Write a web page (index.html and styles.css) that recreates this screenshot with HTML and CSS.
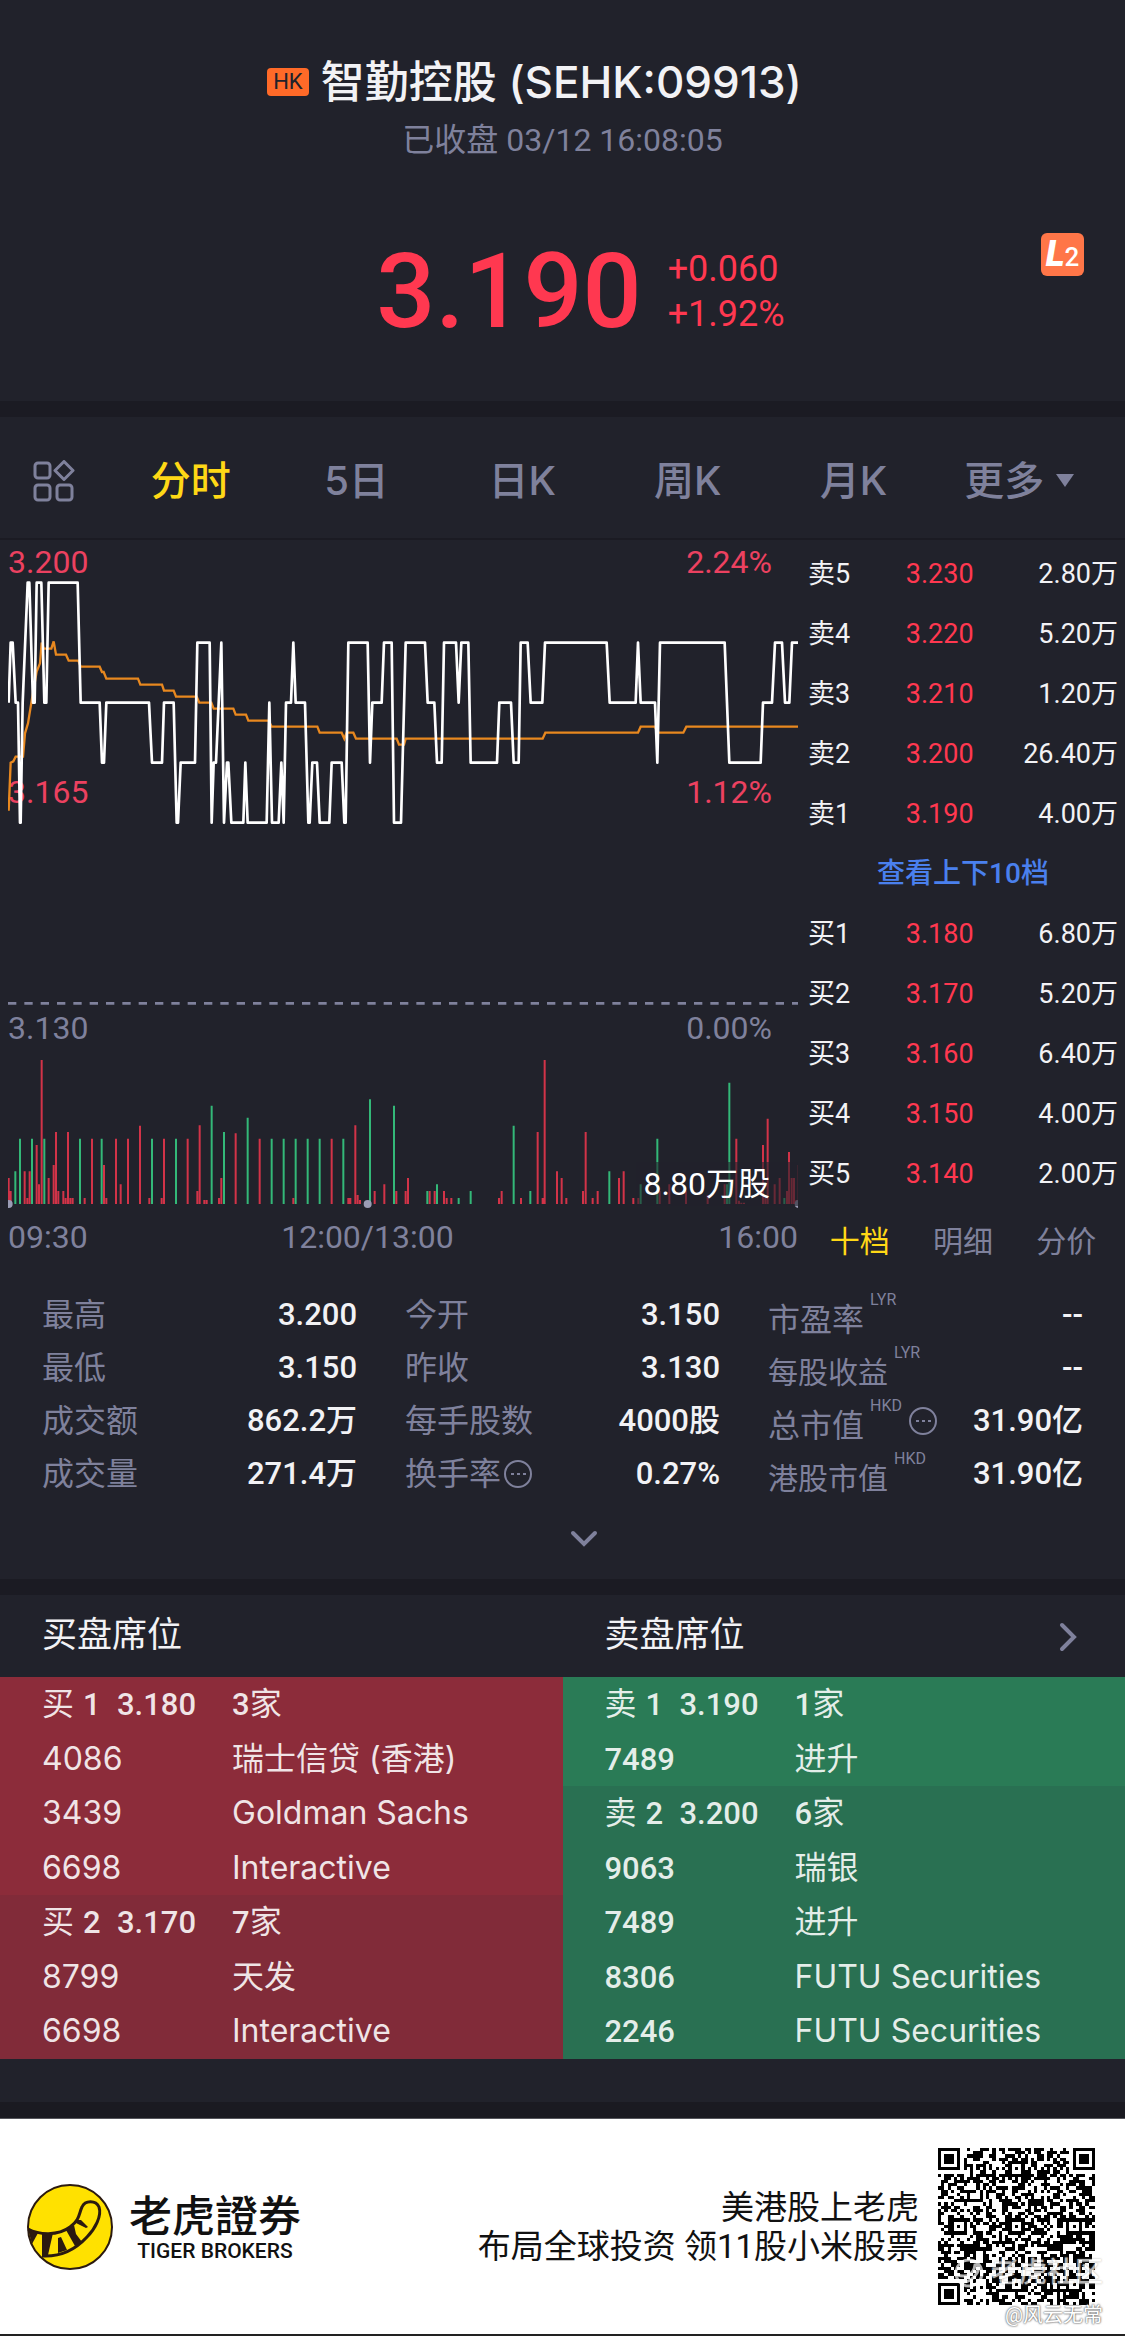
FILE: index.html
```html
<!DOCTYPE html>
<html lang="zh-CN">
  <head>
    <meta charset="UTF-8" />
    <meta name="viewport" content="width=device-width, initial-scale=1.0" />
    <title>智勤控股 (SEHK:09913)</title>
    <link rel="stylesheet" href="styles.css">
  </head>
  <body>
    <header class="quote">
      <h1><span class="market">HK</span>智勤控股 (SEHK:09913)</h1>
      <p class="status">已收盘 03/12 16:08:05</p>
      <div class="price-row">
        <strong class="price">3.190</strong>
        <div class="change">
          <span>+0.060</span>
          <span>+1.92%</span>
        </div>
      </div>
      <span class="level"><b>L</b>2</span>
    </header>

    <nav class="tabs">
      <button class="layout-btn" aria-label="布局">
        <svg width="42" height="42" viewBox="0 0 42 42" fill="none" stroke="currentColor" stroke-width="3">
          <rect x="2" y="3" width="15" height="15" rx="3" />
          <path d="M31 1.500 L40 10.500 L31 19.500 L22 10.500 Z" stroke-linejoin="round" />
          <rect x="2" y="25" width="15" height="15" rx="3" />
          <rect x="24" y="25" width="15" height="15" rx="3" />
        </svg>
      </button>
      <button class="active">分时</button>
      <button>5日</button>
      <button>日K</button>
      <button>周K</button>
      <button>月K</button>
      <button>更多<i class="caret"></i></button>
    </nav>

    <main class="board">
      <section class="chart">
        <div class="plot">
          <span class="tag top up">3.200</span>
          <span class="tag top right up">2.24%</span>
          <span class="tag mid up">3.165</span>
          <span class="tag mid right up">1.12%</span>
          <span class="tag base">3.130</span>
          <span class="tag base right">0.00%</span>
          <svg viewBox="24 0 2370 2004" preserveAspectRatio="none" fill="none">
            <path class="zero" d="M24 1390H2397" />
            <!-- average price -->
            <polyline class="avg" points="26,812 32,668 40,664 47,650 69,650 75,580 84,550 97,470 110,395 120,370 125,308 131,326 154,326 161,304 168,344 198,344 206,362 235,362 242,380 299,380 306,396 311,396 319,416 414,416 421,434 486,434 492,452 521,452 528,470 590,470 598,488 634,488 641,506 700,506 707,524 738,524 745,542 806,542 815,560 952,560 959,578 1025,578 1033,596 1040,578 1060,578 1068,596 1190,596 1197,614 1212,614 1217,596 1628,596 1636,578 1914,578 1922,560 1965,560 1972,578 2050,578 2059,560 2397,560" />
            <!-- price -->
            <polyline class="line" points="26,488 32,308 38,308 47,488 54,488 60,848 62,848 68,488 83,128 88,128 99,488 104,488 110,128 124,128 133,488 139,488 146,128 233,128 242,488 299,488 306,668 312,668 319,488 447,488 456,668 486,668 492,488 521,488 530,848 534,848 542,668 585,668 592,308 629,308 635,848 641,668 648,668 664,308 672,848 681,668 685,668 694,848 730,848 736,668 743,848 800,848 808,488 816,848 836,848 844,668 851,848 858,488 873,488 880,308 887,488 915,488 925,848 929,848 937,668 951,668 959,848 988,848 995,668 1025,668 1033,848 1037,848 1045,308 1103,308 1110,668 1117,488 1145,488 1152,308 1175,308 1182,848 1203,848 1217,308 1275,308 1283,488 1303,488 1311,668 1325,668 1332,308 1368,308 1376,488 1384,308 1405,308 1412,668 1491,668 1498,488 1533,488 1541,668 1556,668 1562,308 1583,308 1592,488 1627,488 1635,308 1820,308 1829,488 1907,488 1914,308 1922,488 1965,488 1972,668 1980,308 2174,308 2188,668 2282,668 2289,488 2316,488 2325,308 2346,308 2355,488 2368,488 2376,308 2397,308" />
            <!-- volume -->
            <g id="volume"></g>
            <g class="dots">
              <circle cx="26" cy="1992" r="12" />
              <circle cx="1103" cy="1992" r="12" />
              <circle cx="2396" cy="1992" r="12" />
            </g>
          </svg>
          <span class="volume-tag">8.80万股</span>
        </div>
        <div class="axis">
          <span>09:30</span>
          <span>12:00/13:00</span>
          <span>16:00</span>
        </div>
      </section>

      <section class="book">
        <table>
          <colgroup><col class="side"><col class="bid"><col></colgroup>
          <tr><td>卖5</td><td>3.230</td><td>2.80万</td></tr>
          <tr><td>卖4</td><td>3.220</td><td>5.20万</td></tr>
          <tr><td>卖3</td><td>3.210</td><td>1.20万</td></tr>
          <tr><td>卖2</td><td>3.200</td><td>26.40万</td></tr>
          <tr><td>卖1</td><td>3.190</td><td>4.00万</td></tr>
          <tr><td colspan="3" class="more"><a href="#">查看上下10档</a></td></tr>
          <tr><td>买1</td><td>3.180</td><td>6.80万</td></tr>
          <tr><td>买2</td><td>3.170</td><td>5.20万</td></tr>
          <tr><td>买3</td><td>3.160</td><td>6.40万</td></tr>
          <tr><td>买4</td><td>3.150</td><td>4.00万</td></tr>
          <tr><td>买5</td><td>3.140</td><td>2.00万</td></tr>
        </table>
        <div class="book-tabs">
          <button class="active">十档</button>
          <button>明细</button>
          <button>分价</button>
        </div>
      </section>
    </main>

    <section class="stats">
      <dl>
        <div><dt>最高</dt><dd>3.200</dd></div>
        <div><dt>最低</dt><dd>3.150</dd></div>
        <div><dt>成交额</dt><dd>862.2万</dd></div>
        <div><dt>成交量</dt><dd>271.4万</dd></div>
      </dl>
      <dl>
        <div><dt>今开</dt><dd>3.150</dd></div>
        <div><dt>昨收</dt><dd>3.130</dd></div>
        <div><dt>每手股数</dt><dd>4000股</dd></div>
        <div>
          <dt>换手率<svg class="info" viewBox="0 0 30 30"><circle cx="15" cy="15" r="13" /><path d="M8 15h3M14 15h3M20 15h3" /></svg></dt>
          <dd>0.27%</dd>
        </div>
      </dl>
      <dl class="noted">
        <div><dt>市盈率<sup>LYR</sup></dt><dd>--</dd></div>
        <div><dt class="small">每股收益<sup>LYR</sup></dt><dd>--</dd></div>
        <div>
          <dt>总市值<sup>HKD</sup><svg class="info" viewBox="0 0 30 30"><circle cx="15" cy="15" r="13" /><path d="M8 15h3M14 15h3M20 15h3" /></svg></dt>
          <dd>31.90亿</dd>
        </div>
        <div><dt class="small">港股市值<sup>HKD</sup></dt><dd>31.90亿</dd></div>
      </dl>
    </section>
    <button class="expand" aria-label="展开">
      <svg width="28" height="18" viewBox="0 0 28 18"><path d="M3 3 L14 14 L25 3" /></svg>
    </button>

    <section class="seats">
      <div class="seats-head">
        <h2>买盘席位</h2>
        <h2>卖盘席位</h2>
        <button aria-label="更多席位">
          <svg width="18" height="30" viewBox="0 0 18 30"><path d="M3 3 L15 15 L3 27" /></svg>
        </button>
      </div>
      <div class="seats-body">
        <table class="buy">
          <tbody>
            <tr class="level-row"><td>买 <b>1</b></td><td>3.180</td><td><b>3</b>家</td></tr>
            <tr><td colspan="2">4086</td><td>瑞士信贷 (香港)</td></tr>
            <tr><td colspan="2">3439</td><td>Goldman Sachs</td></tr>
            <tr><td colspan="2">6698</td><td>Interactive</td></tr>
          </tbody>
          <tbody>
            <tr class="level-row"><td>买 <b>2</b></td><td>3.170</td><td><b>7</b>家</td></tr>
            <tr><td colspan="2">8799</td><td>天发</td></tr>
            <tr><td colspan="2">6698</td><td>Interactive</td></tr>
          </tbody>
        </table>
        <table class="sell">
          <tbody>
            <tr class="level-row"><td>卖 <b>1</b></td><td>3.190</td><td><b>1</b>家</td></tr>
            <tr><td colspan="2">7489</td><td>进升</td></tr>
          </tbody>
          <tbody>
            <tr class="level-row"><td>卖 <b>2</b></td><td>3.200</td><td><b>6</b>家</td></tr>
            <tr><td colspan="2">9063</td><td>瑞银</td></tr>
            <tr><td colspan="2">7489</td><td>进升</td></tr>
            <tr><td colspan="2">8306</td><td>FUTU Securities</td></tr>
            <tr><td colspan="2">2246</td><td>FUTU Securities</td></tr>
          </tbody>
        </table>
      </div>
    </section>

    <footer class="promo">
      <svg class="logo" viewBox="0 0 86 86">
        <circle cx="43" cy="43" r="42" fill="#ffe100" stroke="#2b1a10" stroke-width="2" />
        <path d="M1 45 C12 51 31 52 43 43 C53 36 52 29 55 23 C58 16 69 16 72 23 C75 32 68 45 60 53 C48 66 32 73 15 72" fill="none" stroke="#2b1a10" stroke-width="3" />
        <g fill="#2b1a10">
          <path d="M1 45 L11 49 L5 60 Z" />
          <path d="M15 49 H26 L21 71 L15 71 Z" />
          <path d="M31 54 L34 53 L40 66 L31 69 Z" />
          <path d="M39 46 L47 41 L49 50 L55 58 L48 62 Z" />
          <path d="M49 36 L54 36 L61 43 L59 44 L49 39 Z" />
        </g>
      </svg>
      <div class="brand">
        <strong>老虎證券</strong>
        <span>TIGER BROKERS</span>
      </div>
      <p>美港股上老虎<br>布局全球投资 领11股小米股票</p>
      <div class="code">
        <svg viewBox="0 0 49 49" shape-rendering="crispEdges"><path id="qr" /></svg>
        <span class="community">
          <svg width="32" height="32" viewBox="0 0 32 32"><circle cx="16" cy="16" r="13" /><path d="M4 18 Q20 22 22 8 Q28 8 24 16 Q18 26 8 25" /></svg>老虎社区
        </span>
        <span class="author">@风云无常</span>
      </div>
    </footer>
    <script src="script.js"></script>
  </body>
</html>
```
FILE: styles.css
```css
* {
  box-sizing: border-box;
}
body {
  margin: 0;
  background: #21222b;
  color: #f2f2f5;
  font-family: Roboto, "Noto Sans CJK SC", sans-serif;
  font-size: 32px;
  line-height: 40px;
}
h1,
h2,
p,
dl,
dd {
  margin: 0;
  font-weight: 400;
}
button {
  padding: 0;
  border: none;
  background: none;
  color: #7f819c;
  font: inherit;
  cursor: pointer;
}
table {
  width: 100%;
  border-collapse: collapse;
  table-layout: fixed;
}
td {
  padding: 0;
  vertical-align: baseline;
}

/* header */
.quote {
  position: relative;
  height: 417px;
  padding-top: 56px;
  border-bottom: 16px solid #1b1b23;
}
.quote h1 {
  display: flex;
  justify-content: center;
  align-items: center;
  gap: 12px;
  padding-right: 56px;
  font-family: Inter, "Noto Sans CJK SC", sans-serif;
  font-size: 44px;
  font-weight: 500;
  line-height: 52px;
}
.market {
  padding: 0 6px;
  border-radius: 4px;
  background: #ff6a28;
  color: #21222b;
  font-family: Roboto, sans-serif;
  font-size: 22px;
  font-weight: 400;
  line-height: 28px;
}
.status {
  margin-top: 12px;
  color: #7f819c;
  text-align: center;
}
.price-row {
  display: flex;
  justify-content: center;
  align-items: center;
  gap: 26px;
  margin-top: 70px;
  padding-left: 36px;
  color: #ff3850;
}
.price {
  font-size: 104px;
  font-weight: 500;
  line-height: 124px;
}
.change {
  display: flex;
  flex-direction: column;
  font-size: 36px;
  line-height: 45px;
}
.level {
  position: absolute;
  top: 233px;
  right: 41px;
  width: 43px;
  height: 43px;
  border-radius: 6px;
  background: #ff7648;
  color: #fff;
  font-size: 26px;
  font-weight: 500;
  line-height: 43px;
  text-align: center;
}
.level b {
  font-size: 36px;
  font-style: italic;
  font-weight: 900;
}

/* period tabs */
.tabs {
  display: grid;
  grid-template-columns: 108px repeat(6, 1fr);
  align-items: center;
  height: 123px;
  padding: 6px 23px 0 0;
  border-bottom: 2px solid #1b1b23;
  font-family: Inter, "Noto Sans CJK SC", sans-serif;
  font-size: 40px;
}
.tabs button {
  font-weight: 500;
  line-height: 60px;
}
.tabs .layout-btn {
  display: flex;
  padding-left: 33px;
}
.tabs .active,
.book-tabs .active {
  color: #ffd816;
}
.caret {
  display: inline-block;
  margin-left: 12px;
  border: 9px solid transparent;
  border-top: 13px solid #7f819c;
  border-bottom: none;
  vertical-align: 8px;
}

/* chart and order book */
.board {
  display: grid;
  grid-template-columns: 1fr 325px;
}
.chart {
  padding: 0 2px 0 8px;
}
.plot {
  position: relative;
}
.plot svg {
  position: relative;
  display: block;
  width: 100%;
  height: 668px;
}
.zero {
  stroke: #7f819c;
  stroke-width: 8;
  stroke-dasharray: 25 24;
}
.avg {
  stroke: #e8881f;
  stroke-width: 7;
}
.line {
  stroke: #fff;
  stroke-width: 8;
  stroke-linejoin: round;
}
.rise {
  stroke: #ff3850;
  stroke-width: 6;
  opacity: 0.8;
}
.fall {
  stroke: #33b878;
  stroke-width: 6;
}
.dots {
  fill: #9a9cb4;
}
.tag {
  position: absolute;
  left: 0;
  color: #7f819c;
  line-height: 32px;
}
.tag.right {
  right: 26px;
  left: auto;
}
.tag.up {
  color: #ec4160;
}
.tag.top {
  top: 6px;
}
.tag.mid {
  top: 236px;
}
.tag.base {
  top: 472px;
}
.volume-tag {
  position: absolute;
  right: 0;
  bottom: 2px;
  padding: 0 28px 0 8px;
  background: rgba(33, 34, 43, 0.6);
  color: #fff;
  line-height: 44px;
}
.axis {
  display: grid;
  grid-template-columns: 25fr 41fr 34fr;
  padding-top: 9px;
  color: #7f819c;
}
.axis span:nth-child(2) {
  text-align: center;
}
.axis span:last-child {
  text-align: right;
}
.book {
  padding: 4px 7px 0 8px;
  font-size: 27px;
}
.book .side {
  width: 30%;
}
.book .bid {
  width: 25%;
}
.book td {
  height: 60px;
  line-height: 60px;
}
.book td:nth-child(2) {
  color: #ff3850;
  text-align: center;
}
.book td:nth-child(3) {
  text-align: right;
}
.book .more {
  font-size: 28px;
  font-weight: 500;
  text-align: center;
}
.book a {
  color: #4a80ee;
  text-decoration: none;
}
.book-tabs {
  display: grid;
  grid-template-columns: repeat(3, 1fr);
  font-size: 30px;
  line-height: 76px;
}

/* key figures */
.stats {
  display: grid;
  grid-template-columns: repeat(3, 1fr);
  gap: 48px;
  padding: 8px 42px 0;
}
.stats div {
  display: flex;
  justify-content: space-between;
  align-items: center;
  height: 53px;
}
.stats dt {
  display: flex;
  align-items: center;
  color: #7f819c;
}
.stats dd {
  font-size: 31px;
  font-weight: 500;
}
.noted dt {
  padding-top: 10px;
}
.stats .small {
  font-size: 30px;
}
.stats sup {
  margin: 0 6px;
  padding-bottom: 40px;
  font-size: 16px;
  line-height: 16px;
}
.info {
  width: 30px;
  height: 30px;
  margin-left: 2px;
  fill: none;
  stroke: #7f819c;
  stroke-width: 2;
}
.noted .info {
  margin: 0 0 10px;
}
.expand {
  display: block;
  width: 100%;
  height: 79px;
  padding: 0 0 6px 42px;
}
.expand path,
.seats-head path {
  fill: none;
  stroke: #7f819c;
  stroke-width: 4;
  stroke-linecap: round;
}

/* broker seats */
.seats {
  padding-bottom: 43px;
  border-top: 16px solid #1b1b23;
  border-bottom: 16px solid #1a1a21;
}
.seats-head {
  display: grid;
  grid-template-columns: 1fr 1fr;
  position: relative;
}
.seats-head h2 {
  padding-left: 42px;
  font-size: 35px;
  line-height: 82px;
}
.seats-head button {
  position: absolute;
  top: 27px;
  right: 48px;
  height: 30px;
  line-height: 0;
}
.seats-body {
  display: grid;
  grid-template-columns: 1fr 1fr;
  color: rgba(255, 255, 255, 0.88);
  font-family: Inter, "Noto Sans CJK SC", sans-serif;
  line-height: 48px;
}
.seats-body table {
  height: 382px;
}
.seats-body td {
  height: 54px;
  padding-top: 3px;
}
.seats-body td:first-child {
  width: 117px;
  padding-left: 42px;
}
.seats-body td:nth-child(2) {
  width: 115px;
}
.seats-body td[colspan] + td {
  width: auto;
}
.level-row td:nth-child(2),
.level-row b,
.sell td[colspan] {
  font-family: Roboto, sans-serif;
  font-size: 31px;
  font-weight: 500;
}
.buy {
  background: #8c2c3a;
}
.buy tbody + tbody {
  background: #812b39;
}
.sell {
  background: #2a7b56;
}
.sell tbody + tbody {
  background: #297052;
}

/* promo footer */
.promo {
  display: flex;
  align-items: center;
  height: 218px;
  padding: 0 30px 0 27px;
  border-top: 1px solid #55565c;
  border-bottom: 2px solid #222;
  background: #fff;
  color: #111;
}
.logo {
  width: 86px;
  height: 86px;
}
.brand {
  display: flex;
  flex-direction: column;
  align-items: center;
  margin-left: 16px;
}
.brand strong {
  font-family: "Noto Sans CJK TC", sans-serif;
  font-size: 43px;
  font-weight: 500;
  line-height: 48px;
}
.brand span {
  font-size: 21px;
  font-weight: 500;
  line-height: 28px;
}
.promo p {
  margin-left: auto;
  font-size: 33px;
  line-height: 39px;
  text-align: right;
}
.code {
  position: relative;
  width: 157px;
  height: 157px;
  margin-left: 19px;
}
.code > svg {
  display: block;
}
.community,
.author {
  position: absolute;
  right: -8px;
  color: #fff;
  white-space: nowrap;
}
.community {
  display: flex;
  align-items: center;
  gap: 6px;
  bottom: 16px;
  font-size: 28px;
  font-weight: 500;
  line-height: 32px;
  opacity: 0.7;
  text-shadow: 0 0 2px #888;
}
.community svg {
  fill: none;
  stroke: #fff;
  stroke-width: 3;
}
.author {
  bottom: -22px;
  font-size: 20px;
  line-height: 24px;
  text-shadow: 0 0 2px #555, 0 0 2px #777;
}
```
FILE: script.js
```js
// volume bars: [x, top]
const rise = [
  [26, 594], [32, 633], [74, 574], [82, 654], [89, 574], [110, 495], [117, 613], [125, 240],
  [146, 594], [161, 555], [168, 456], [175, 633], [190, 633], [197, 654], [204, 456], [211, 654],
  [218, 654], [254, 654], [276, 476], [312, 555], [319, 654], [348, 476], [362, 613], [384, 476],
  [420, 437], [448, 654], [485, 654], [492, 476], [563, 476], [592, 633], [599, 436], [613, 660],
  [620, 660], [657, 654], [664, 594], [707, 460], [779, 476], [880, 654], [995, 476], [1045, 654],
  [1051, 654], [1066, 436], [1073, 645], [1080, 660], [1124, 633], [1153, 613], [1189, 633],
  [1217, 633], [1224, 594], [1289, 633], [1304, 633], [1332, 633], [1340, 654], [1354, 654],
  [1497, 654], [1505, 633], [1563, 654], [1613, 456], [1628, 654], [1634, 240], [1671, 574],
  [1685, 594], [1699, 654], [1749, 633], [1757, 456], [1778, 654], [1793, 633], [1857, 594],
  [1871, 574], [1900, 654], [1915, 654], [1979, 633], [2008, 613], [2058, 633], [2123, 645],
  [2174, 613], [2209, 476], [2217, 662], [2224, 668], [2232, 668], [2289, 495], [2296, 654],
  [2303, 416], [2324, 613], [2339, 594], [2361, 633], [2367, 516], [2375, 594], [2382, 594],
  [2389, 660], [2396, 555],
];
const fall = [
  [46, 574], [60, 476], [96, 476], [133, 476], [240, 476], [305, 476], [456, 476], [528, 476],
  [635, 377], [672, 456], [743, 413], [815, 476], [851, 476], [887, 476], [923, 476], [959, 476],
  [1030, 476], [1110, 358], [1182, 377], [1282, 633], [1311, 613], [1376, 654], [1412, 633],
  [1541, 437], [1591, 633], [1828, 574], [1922, 613], [1972, 476], [2181, 613], [2188, 308],
  [2353, 654],
];

function bars(list) {
  return list.map(([x, y]) => `M${x} 1992V${y + 1320}`).join("");
}
document.getElementById("volume").innerHTML =
  `<path class="rise" d="${bars(rise)}"/><path class="fall" d="${bars(fall)}"/>`;

// QR code, 49 x 49 modules
const size = 49;
let seed = 9913;
function random() {
  seed = (seed * 1103515245 + 12345) % 2147483648;
  return seed / 2147483648;
}
function ring(x, y, cx, cy, r) {
  const d = Math.max(Math.abs(x - cx), Math.abs(y - cy));
  return d > r ? null : d;
}
function module(x, y) {
  for (const [cx, cy] of [[3, 3], [45, 3], [3, 45]]) {
    const d = ring(x, y, cx, cy, 4);
    if (d !== null) return d === 3 || d < 2;
  }
  for (const cx of [6, 24, 42]) {
    for (const cy of [6, 24, 42]) {
      if (Math.min(cx, cy) === 6 && cx + cy !== 30) continue;
      const d = ring(x, y, cx, cy, 2);
      if (d !== null) return d !== 1;
    }
  }
  if (x === 6 || y === 6) return (x + y) % 2 === 0;
  return random() < 0.5;
}
let d = "";
for (let y = 0; y < size; y++) {
  for (let x = 0; x < size; x++) {
    if (module(x, y)) d += `M${x} ${y}h1v1h-1z`;
  }
}
document.getElementById("qr").setAttribute("d", d);
```
